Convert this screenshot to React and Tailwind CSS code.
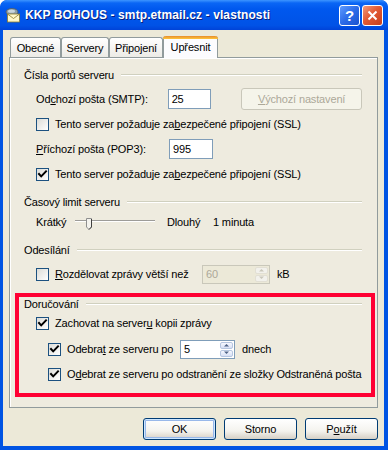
import React from 'react';

const U = ({ children }) => <span className="underline underline-offset-[1px]">{children}</span>;

const GroupHeader = ({ title }) => (
  <div className="flex items-center h-[14px]">
    <span className="whitespace-nowrap">{title}</span>
    <div className="flex-1 ml-[7px] h-[2px] border-t border-t-[#D0D0BF] border-b border-b-white" />
  </div>
);

const CheckBox = ({ checked }) => (
  <span className="w-[13px] h-[13px] shrink-0 border border-[#1C5180] bg-[linear-gradient(135deg,#DCDCD7_0%,#FFFFFF_100%)] flex items-center justify-center">
    {checked && (
      <svg width="11" height="11" viewBox="0 0 11 11">
        <path d="M2 5 L4.2 7.4 L9 2.4" fill="none" stroke="#000" strokeWidth="2" strokeLinecap="square" />
      </svg>
    )}
  </span>
);

const CheckRow = ({ checked, children, indent = 'ml-[12px]' }) => (
  <div className={`flex items-center h-[14px] ${indent}`}>
    <CheckBox checked={checked} />
    <span className="ml-[6px] whitespace-nowrap">{children}</span>
  </div>
);

const TextBox = ({ value, width }) => (
  <div className={`${width} h-[20px] border border-[#7F9DB9] bg-white flex items-center pl-[3px]`}>{value}</div>
);

const SpinArrow = ({ up, disabled }) => (
  <svg width="7" height="4" viewBox="0 0 7 4">
    <path d={up ? 'M1 3.5 L3.5 1 L6 3.5 Z' : 'M1 0.5 L3.5 3 L6 0.5 Z'} fill={disabled ? '#C9C7BA' : '#4D6185'} />
  </svg>
);

const SpinBox = ({ value, width, disabled }) => (
  <div
    className={`${width} h-[19px] border flex ${
      disabled ? 'border-[#C9C7BA] bg-[#ECE9D8] text-[#ACA899]' : 'border-[#7F9DB9] bg-white'
    }`}
  >
    <div className="flex-1 flex items-center pl-[3px]">{value}</div>
    <div className="w-[15px] flex flex-col p-px gap-px">
      <div
        className={`flex-1 rounded-[2px] border flex items-center justify-center ${
          disabled ? 'border-[#E2DFD4] bg-[#F2F1EC]' : 'border-[#B6C6E0] bg-[linear-gradient(180deg,#F6F8FF,#D7E0F5)]'
        }`}
      >
        <SpinArrow up disabled={disabled} />
      </div>
      <div
        className={`flex-1 rounded-[2px] border flex items-center justify-center ${
          disabled ? 'border-[#E2DFD4] bg-[#F2F1EC]' : 'border-[#B6C6E0] bg-[linear-gradient(180deg,#F6F8FF,#D7E0F5)]'
        }`}
      >
        <SpinArrow disabled={disabled} />
      </div>
    </div>
  </div>
);

const Slider = () => (
  <svg width="92" height="22" viewBox="0 0 92 22" className="shrink-0">
    <rect x="0" y="9" width="80" height="1" fill="#9D9C99" />
    <rect x="0" y="10" width="80" height="1" fill="#FFFFFF" />
    <path d="M11.5 7.5 H16.5 V16 L14 18.5 L11.5 16 Z" fill="#F4F3EE" stroke="#8E8F8F" />
    <path d="M16.5 8 V16 L14 18.5" fill="none" stroke="#404040" />
  </svg>
);

const Tab = ({ label, width, active }) =>
  active ? (
    <div
      className={`${width} h-[22px] -mb-px relative z-10 border-x border-[#919B9C] bg-[#FCFCFE] rounded-t-[3px] flex flex-col`}
    >
      <div className="h-[3px] rounded-t-[3px] bg-[linear-gradient(180deg,#E68B2C,#FFC73C)] -mx-px" />
      <div className="flex-1 flex items-center justify-center pb-[2px]">{label}</div>
    </div>
  ) : (
    <div
      className={`${width} h-[20px] border border-b-0 border-[#919B9C] rounded-t-[3px] bg-[linear-gradient(180deg,#FFFFFF,#ECEBE6)] flex items-center justify-center pt-px`}
    >
      {label}
    </div>
  );

const XpButton = ({ children, isDefault }) => (
  <div
    className={`w-[73px] h-[22px] rounded-[3px] border border-[#003C74] bg-[linear-gradient(180deg,#FFFFFF_0%,#F4F3EE_60%,#D6D0C5_100%)] flex items-center justify-center ${
      isDefault ? 'shadow-[inset_0_0_0_1px_#CEE7FF,inset_0_0_0_2px_#98B8EA]' : ''
    }`}
  >
    {children}
  </div>
);

const MailIcon = () => (
  <svg width="16" height="16" viewBox="0 0 16 16">
    <ellipse cx="7" cy="5" rx="6" ry="3.5" fill="#8C9EA8" stroke="#4E5B63" strokeWidth="0.8" />
    <ellipse cx="6.5" cy="4.2" rx="3.5" ry="1.6" fill="#C9D6DC" />
    <rect x="2.5" y="7" width="12" height="8" fill="#FFF8C8" stroke="#8A7A2E" strokeWidth="0.8" />
    <path d="M2.5 7 L8.5 11.5 L14.5 7" fill="none" stroke="#8A7A2E" strokeWidth="0.8" />
  </svg>
);

export default function App() {
  return (
    <div className="w-[388px] h-[450px] bg-[#0054E3] rounded-t-[7px] flex flex-col font-['Liberation_Sans',Arial,sans-serif] text-[11px] leading-[13px] tracking-[-0.15px] text-black overflow-hidden">
      {/* title bar */}
      <div className="h-[30px] shrink-0 flex items-center pl-[5px] pr-[5px] rounded-t-[7px] bg-[linear-gradient(180deg,#3D95FF_0%,#0A66F5_10%,#0058EE_30%,#0055EA_60%,#0052E6_85%,#0043D8_100%)]">
        <MailIcon />
        <span className="ml-[4px] text-white font-bold text-[12px] tracking-[0.1px] [text-shadow:1px_1px_0_#0A1E7A] whitespace-nowrap">
          KKP BOHOUS - smtp.etmail.cz - vlastnosti
        </span>
        <div className="ml-auto flex gap-[2px]">
          <div className="w-[21px] h-[21px] rounded-[3px] border border-white bg-[linear-gradient(135deg,#5D9BFF_0%,#2C6BE8_50%,#1A52CF_100%)] flex items-center justify-center text-white font-bold text-[15px] leading-none">
            ?
          </div>
          <div className="w-[21px] h-[21px] rounded-[3px] border border-white bg-[linear-gradient(135deg,#F09A7C_0%,#E25A34_45%,#C83F1B_100%)] flex items-center justify-center">
            <svg width="11" height="11" viewBox="0 0 11 11">
              <path d="M1.5 1.5 L9.5 9.5 M9.5 1.5 L1.5 9.5" stroke="#fff" strokeWidth="2" />
            </svg>
          </div>
        </div>
      </div>

      {/* dialog body */}
      <div className="flex-1 ml-[3px] mr-[4px] mb-[4px] bg-[#ECE9D8] pl-[6px] pr-[6px] pt-[5px] flex flex-col">
        <div className="flex items-end h-[22px] pl-px">
          <Tab label="Obecné" width="w-[51px]" />
          <Tab label="Servery" width="w-[48px]" />
          <Tab label="Připojení" width="w-[54px]" />
          <Tab label="Upřesnit" width="w-[55px]" active />
        </div>

        <div className="h-[351px] border border-[#919B9C] bg-[#EEEBDF] shadow-[inset_1px_1px_0_#fff] pl-[14px] pr-[15px] pt-[10px] flex flex-col">
          <GroupHeader title="Čísla portů serveru" />

          <div className="flex items-center h-[22px] ml-[12px] mt-[6px]">
            <span className="w-[133px] whitespace-nowrap">
              Od<U>c</U>hozí pošta (SMTP):
            </span>
            <TextBox value="25" width="w-[44px]" />
            <div className="ml-[30px] w-[122px] h-[22px] rounded-[3px] border border-[#C9C7BA] bg-[#F5F4EA] text-[#ACA899] flex items-center justify-center">
              <U>V</U>ýchozí nastavení
            </div>
          </div>

          <div className="mt-[7px]">
            <CheckRow>
              Tento server požaduje za<U>b</U>ezpečené připojení (SSL)
            </CheckRow>
          </div>

          <div className="flex items-center h-[22px] ml-[12px] mt-[7px]">
            <span className="w-[133px] whitespace-nowrap">
              <U>P</U>říchozí pošta (POP3):
            </span>
            <TextBox value="995" width="w-[44px]" />
          </div>

          <div className="mt-[7px]">
            <CheckRow checked>
              Tento server požaduje za<U>b</U>ezpečené připojení (SSL)
            </CheckRow>
          </div>

          <div className="mt-[14px]">
            <GroupHeader title="Časový limit serveru" />
          </div>
          <div className="flex items-center h-[22px] ml-[12px] mt-[2px]">
            <span className="w-[39px]">Krátký</span>
            <Slider />
            <span className="w-[46px]">Dlouhý</span>
            <span>1 minuta</span>
          </div>

          <div className="mt-[10px]">
            <GroupHeader title="Odesílání" />
          </div>
          <div className="flex items-center h-[20px] ml-[12px] mt-[7px]">
            <CheckBox />
            <span className="ml-[6px] w-[147px] whitespace-nowrap">
              <U>R</U>ozdělovat zprávy větší než
            </span>
            <SpinBox value="60" width="w-[68px]" disabled />
            <span className="ml-[7px]">kB</span>
          </div>

          {/* highlighted section */}
          <div className="mt-[9px] -ml-[9px] -mr-[13px] border-[4px] border-[#FF0033] pl-[5px] pr-[9px] pb-[12px]">
            <GroupHeader title="Doručování" />
            <div className="mt-[5px]">
              <CheckRow checked>
                Zachovat na server<U>u</U> kopii zprávy
              </CheckRow>
            </div>
            <div className="flex items-center h-[20px] ml-[24px] mt-[9px]">
              <CheckBox checked />
              <span className="ml-[6px] w-[113px] whitespace-nowrap">
                Odebra<U>t</U> ze serveru po
              </span>
              <SpinBox value="5" width="w-[55px]" />
              <span className="ml-[7px]">dnech</span>
            </div>
            <div className="mt-[8px]">
              <CheckRow checked indent="ml-[24px]">
                O<U>d</U>ebrat ze serveru po odstranění ze složky Odstraněná pošta
              </CheckRow>
            </div>
          </div>
        </div>

        <div className="mt-[10px] flex justify-end gap-[8px]">
          <XpButton isDefault>OK</XpButton>
          <XpButton>Storno</XpButton>
          <XpButton>
            P<U>o</U>užít
          </XpButton>
        </div>
      </div>
    </div>
  );
}
